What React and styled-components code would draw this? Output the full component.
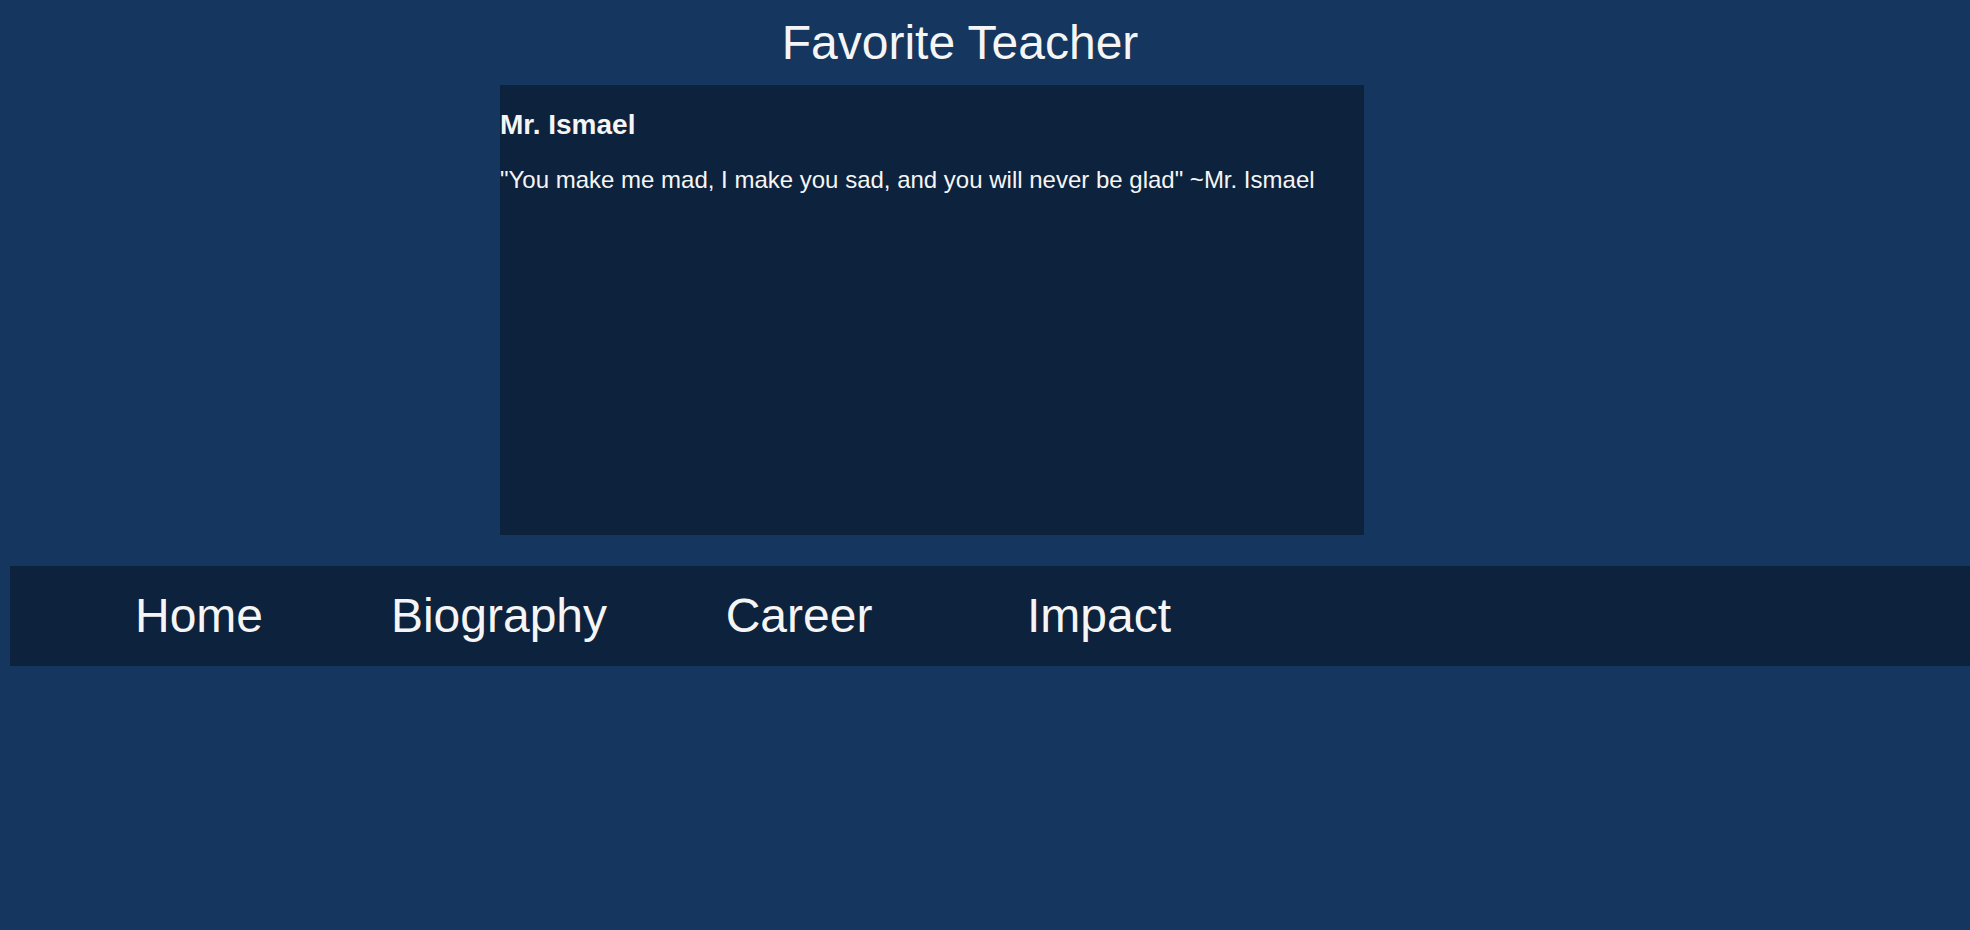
import styled, { createGlobalStyle } from "styled-components";

const GlobalStyle = createGlobalStyle`
  html, body {
    margin: 0;
    padding: 0;
    background-color: #14365f;
    min-height: 100%;
  }

  body {
    font-family: "Liberation Sans", Arial, sans-serif;
    color: #f5f5f5;
  }
`;

const Page = styled.div`
  min-height: 930px;
  padding-left: 10px;
  box-sizing: border-box;
`;

const Title = styled.h1`
  width: 1900px;
  margin: 0;
  padding-top: 16px;
  font-size: 48px;
  font-weight: 400;
  line-height: 54px;
  text-align: center;
`;

const TeacherCard = styled.section`
  box-sizing: border-box;
  width: 864px;
  height: 450px;
  margin: 15px 0 0 490px;
  padding-top: 24px;
  background-color: #0d223c;
`;

const TeacherName = styled.h2`
  margin: 0;
  font-size: 28px;
  font-weight: 700;
  line-height: 32px;
`;

const Quote = styled.p`
  margin: 25px 0 0;
  font-size: 24px;
  line-height: 28px;
`;

const NavBar = styled.nav`
  display: flex;
  align-items: center;
  height: 100px;
  margin-top: 31px;
  padding-left: 39px;
  background-color: #0d223c;
`;

const NavItem = styled.a`
  width: 300px;
  text-align: center;
  font-size: 48px;
  line-height: 54px;
  color: #f5f5f5;
  text-decoration: none;
  cursor: pointer;
`;

const links = ["Home", "Biography", "Career", "Impact"];

const App = () => {
  return (
    <>
      <GlobalStyle />
      <Page>
        <Title>Favorite Teacher</Title>

        <TeacherCard>
          <TeacherName>Mr. Ismael</TeacherName>
          <Quote>
            "You make me mad, I make you sad, and you will never be glad"
            ~Mr. Ismael
          </Quote>
        </TeacherCard>

        <NavBar>
          {links.map((link) => (
            <NavItem key={link}>{link}</NavItem>
          ))}
        </NavBar>
      </Page>
    </>
  );
};

export default App;
